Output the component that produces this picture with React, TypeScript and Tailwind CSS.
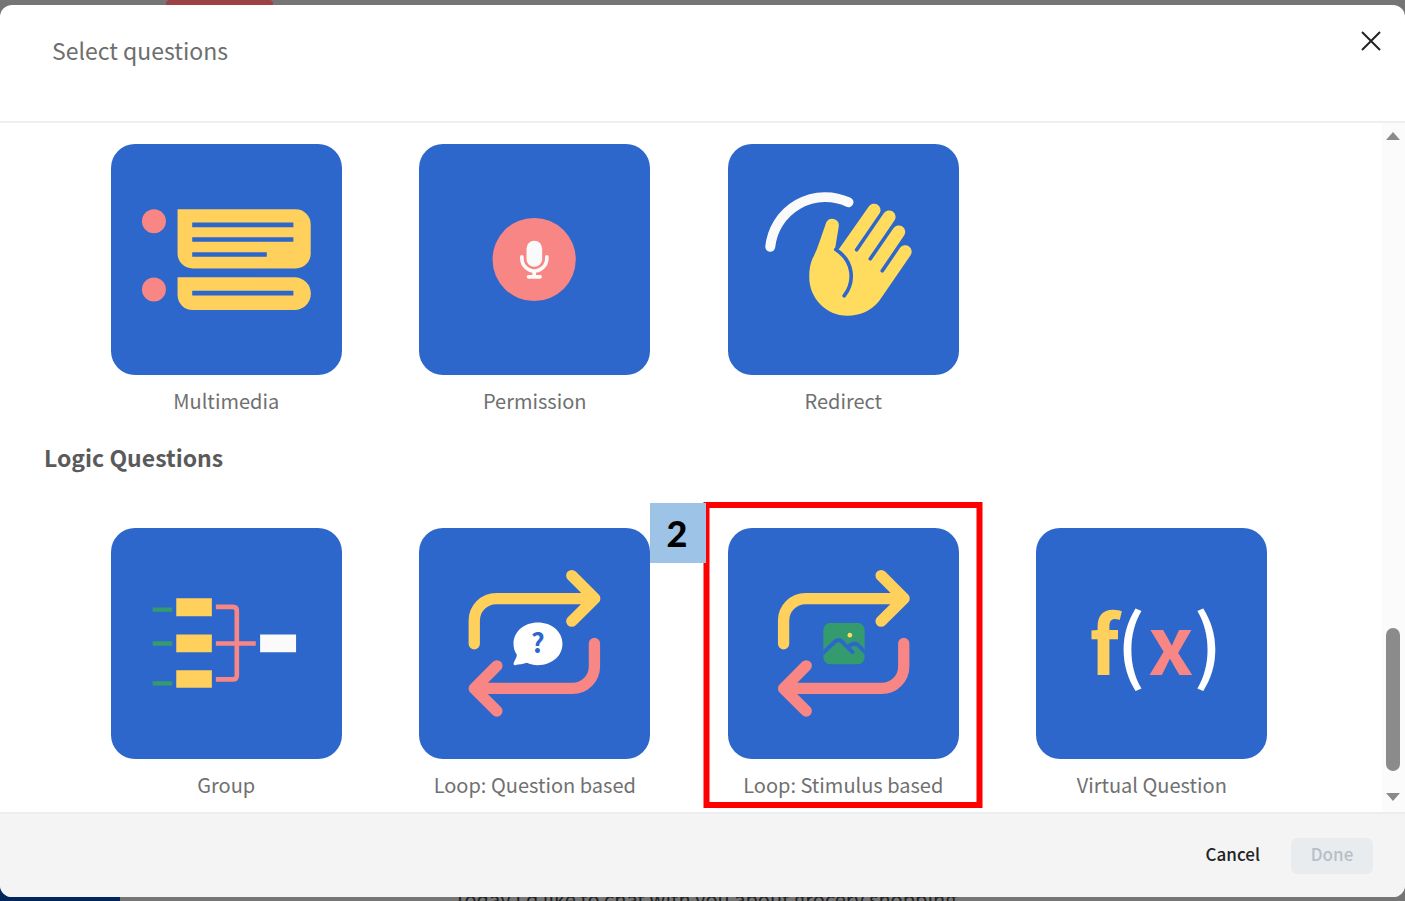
import type { ReactNode } from "react";

const BLUE = "#2d67cb";
const YELLOW = "#ffd05b";
const PINK = "#f78684";
const GREEN = "#349b6e";

function Art({ viewBox, children }: { viewBox: string; children: ReactNode }) {
  return (
    <svg viewBox={viewBox} className="block size-full" aria-hidden="true">
      {children}
    </svg>
  );
}

function MultimediaArt() {
  return (
    <Art viewBox="18 16 694 694">
      <circle cx="147" cy="248" r="36" fill={PINK} />
      <circle cx="147" cy="453" r="36" fill={PINK} />
      <path d="M218 212H573A45 45 0 0 1 618 257V345A45 45 0 0 1 573 390H263A45 45 0 0 1 218 345Z" fill={YELLOW} />
      <path d="M218 416H569A49 49 0 0 1 569 515H263A45 45 0 0 1 218 470Z" fill={YELLOW} />
      <path d="M262 259H566M262 303H566M262 348H486M262 464H566" stroke={BLUE} strokeWidth="14" />
    </Art>
  );
}

function PermissionArt() {
  return (
    <Art viewBox="21 16 694 694">
      <circle cx="367" cy="363" r="125" fill={PINK} />
      <rect x="344" y="307" width="47" height="78" rx="23" fill="#fafafa" />
      <path d="M330 355V360A37 37 0 0 0 405 360V355" fill="none" stroke="#fafafa" strokeWidth="11" strokeLinecap="round" />
      <path d="M367 398V415" stroke="#fafafa" strokeWidth="11" />
      <path d="M350 415H385" stroke="#fafafa" strokeWidth="11" strokeLinecap="round" />
    </Art>
  );
}

function RedirectArt() {
  return (
    <Art viewBox="18 16 694 694">
      <path d="M145 325A166 166 0 0 1 380 191" fill="none" stroke="#fafafa" strokeWidth="30" strokeLinecap="round" />
      <path
        d="M272 360Q284 338 293 310L313 252A20 20 0 0 1 351 262L339 335L352 331L441 204A19 19 0 0 1 473 225L400 331A5 5 0 0 0 409 337L486 224A19 19 0 0 1 518 246L441 358A5 5 0 0 0 450 364L515 269A19 19 0 0 1 547 291L477 394A5 5 0 0 0 486 400L535 328A19 19 0 0 1 566 351L472 488C445 520 415 532 377 532C312 532 262 480 262 415C262 395 265 375 272 360Z"
        fill="#ffdc5d"
      />
      <path d="M342 333C396 368 400 430 367 472" fill="none" stroke={BLUE} strokeWidth="11" strokeLinecap="round" />
    </Art>
  );
}

function GroupArt() {
  return (
    <Art viewBox="18 23 694 694">
      <path d="M143 268H202M143 370H202M143 490H202" stroke={GREEN} strokeWidth="13" />
      <path d="M214 234H321V288H214ZM214 343H321V396H214ZM214 450H321V503H214Z" fill={YELLOW} />
      <path d="M333 260H384Q396 260 396 272V466Q396 478 384 478H333M333 370H453" fill="none" stroke={PINK} strokeWidth="14" />
      <path d="M466 343H574V396H466Z" fill="#fafafa" />
    </Art>
  );
}

function LoopArrows() {
  return (
    <g fill="none" strokeWidth="34" strokeLinecap="round" strokeLinejoin="round">
      <path d="M187 446V376A66 66 0 0 1 253 310H546M480 241L549 310L480 378" stroke={YELLOW} />
      <path d="M548 445V514A66 66 0 0 1 482 580H190M255 512L187 580L255 648" stroke={PINK} />
    </g>
  );
}

function LoopQuestionArt() {
  return (
    <Art viewBox="21 98 694 694">
      <LoopArrows />
      <path
        d="M378 382C420 382 452 409 452 446C452 483 420 510 378 510C366 510 355 507 345 503C335 507 320 508 310 510Q303 510 306 502C309 494 315 487 315 479C308 470 305 459 305 446C305 409 337 382 378 382Z"
        fill="#fff"
      />
      <text x="378" y="475" textAnchor="middle" fontSize="80" fontWeight="700" fill={BLUE}>
        ?
      </text>
    </Art>
  );
}

function LoopStimulusArt() {
  return (
    <Art viewBox="20 98 694 694">
      <LoopArrows />
      <clipPath id="stimulus-frame">
        <rect x="306" y="383" width="125" height="125" rx="23" />
      </clipPath>
      <g clipPath="url(#stimulus-frame)">
        <rect x="306" y="383" width="125" height="125" fill={GREEN} />
        <path
          d="M300 479L341 440Q352 430 363 440L394 471M380 457Q396 440 409 448L438 477"
          fill="none"
          stroke={BLUE}
          strokeWidth="12"
          strokeLinecap="round"
        />
        <circle cx="386" cy="420" r="7" fill="#ffdc5d" />
      </g>
    </Art>
  );
}

function VirtualArt() {
  return (
    <Art viewBox="18 22 694 694">
      <g fontSize="242" fontWeight="700">
        <text x="178" y="465" fill={YELLOW}>f</text>
        <text x="260" y="465" fill="#fff" fontWeight="500">(</text>
        <text x="355" y="465" fill={PINK}>x</text>
        <text x="492" y="465" fill="#fff" fontWeight="500">)</text>
      </g>
    </Art>
  );
}

function Tile({ label, selected, children }: { label: string; selected?: boolean; children: ReactNode }) {
  return (
    <div className="relative flex flex-col items-center">
      <button type="button" className="flex flex-col items-center text-[20px] leading-[28px] text-[#707070]">
        <span className="size-[231px] overflow-hidden rounded-3xl bg-[#2d67cb]">{children}</span>
        <span className="mt-3 whitespace-nowrap">{label}</span>
      </button>
      {selected && (
        <>
          <div className="pointer-events-none absolute -top-[26px] -bottom-[9px] left-1/2 w-[279px] -translate-x-1/2 border-6 border-[#ff0000]" />
          <div className="absolute -top-[25px] -left-[39px] flex h-[60px] w-14 items-center justify-center bg-[#9dc3e6] pr-[2px] font-['Lato',sans-serif] text-[36px] font-black text-black">
            2
          </div>
        </>
      )}
    </div>
  );
}

function Scrollbar() {
  return (
    <div className="flex w-[23px] shrink-0 flex-col items-center bg-[#fbfbfb] pt-[9px] pr-[2px] pb-[11px]" aria-hidden="true">
      <svg viewBox="0 0 14 8" className="h-2 w-[14px]">
        <path d="M7 0L14 8H0Z" fill="#8a8a8a" />
      </svg>
      <div className="flex-[487]" />
      <div className="w-[14px] flex-[143] rounded-full bg-[#8b8b8b]" />
      <div className="flex-[22]" />
      <svg viewBox="0 0 14 8" className="h-2 w-[14px]">
        <path d="M0 0H14L7 8Z" fill="#8a8a8a" />
      </svg>
    </div>
  );
}

export default function App() {
  return (
    <div className="relative flex h-screen min-h-[820px] flex-col bg-[#757575] font-['Noto_Sans_CJK_SC',sans-serif]">
      <div className="flex h-[5px] shrink-0 pl-[166px]">
        <div className="w-[107px] rounded-t-sm bg-[#9c4244]" />
      </div>
      <div className="absolute bottom-0 left-0 h-5 w-[120px] bg-[#00265c]" />
      <div role="dialog" aria-labelledby="dialog-title" className="relative flex min-h-0 flex-1 flex-col overflow-hidden rounded-xl bg-white">
        <header className="flex h-[118px] shrink-0 items-start justify-between border-b-2 border-[#efefef] pt-[26px] pr-6 pl-[52px]">
          <h1 id="dialog-title" className="text-[23px] leading-[38px] text-[#6e6e6e]">
            Select questions
          </h1>
          <button type="button" aria-label="Close" className="size-5">
            <svg viewBox="0 0 20 20" className="size-5">
              <path d="M1 1L19 19M19 1L1 19" stroke="#222" strokeWidth="2" />
            </svg>
          </button>
        </header>
        <div className="flex min-h-0 flex-1">
          <main className="min-w-0 flex-1 pt-[21px]">
            <section className="grid grid-cols-4 pr-[76px] pl-[72px]">
              <Tile label="Multimedia"><MultimediaArt /></Tile>
              <Tile label="Permission"><PermissionArt /></Tile>
              <Tile label="Redirect"><RedirectArt /></Tile>
            </section>
            <h2 className="mt-[26px] pl-11 text-[23px] leading-[32px] font-bold text-[#5a5a5a]">Logic Questions</h2>
            <section className="mt-[55px] grid grid-cols-4 pr-[76px] pl-[72px]">
              <Tile label="Group"><GroupArt /></Tile>
              <Tile label="Loop: Question based"><LoopQuestionArt /></Tile>
              <Tile label="Loop: Stimulus based" selected><LoopStimulusArt /></Tile>
              <Tile label="Virtual Question"><VirtualArt /></Tile>
            </section>
          </main>
          <Scrollbar />
        </div>
        <footer className="flex h-[85px] shrink-0 items-center justify-end gap-[31px] border-t-2 border-[#ebedef] bg-[#f4f4f4] pr-8">
          <button type="button" className="h-9 pb-1 text-[17px] leading-8 font-medium text-[#222]">Cancel</button>
          <button type="button" disabled className="h-9 w-[82px] rounded-md bg-[#e8ecef] pb-1 text-[17px] leading-8 font-medium text-[#b7bec6]">
            Done
          </button>
        </footer>
      </div>
      <div className="relative flex h-1 shrink-0 items-center overflow-hidden pl-[454px]">
        <p className="text-[20px] leading-6 whitespace-nowrap text-[#1f1f1f]">Today I'd like to chat with you about grocery shopping.</p>
      </div>
    </div>
  );
}
